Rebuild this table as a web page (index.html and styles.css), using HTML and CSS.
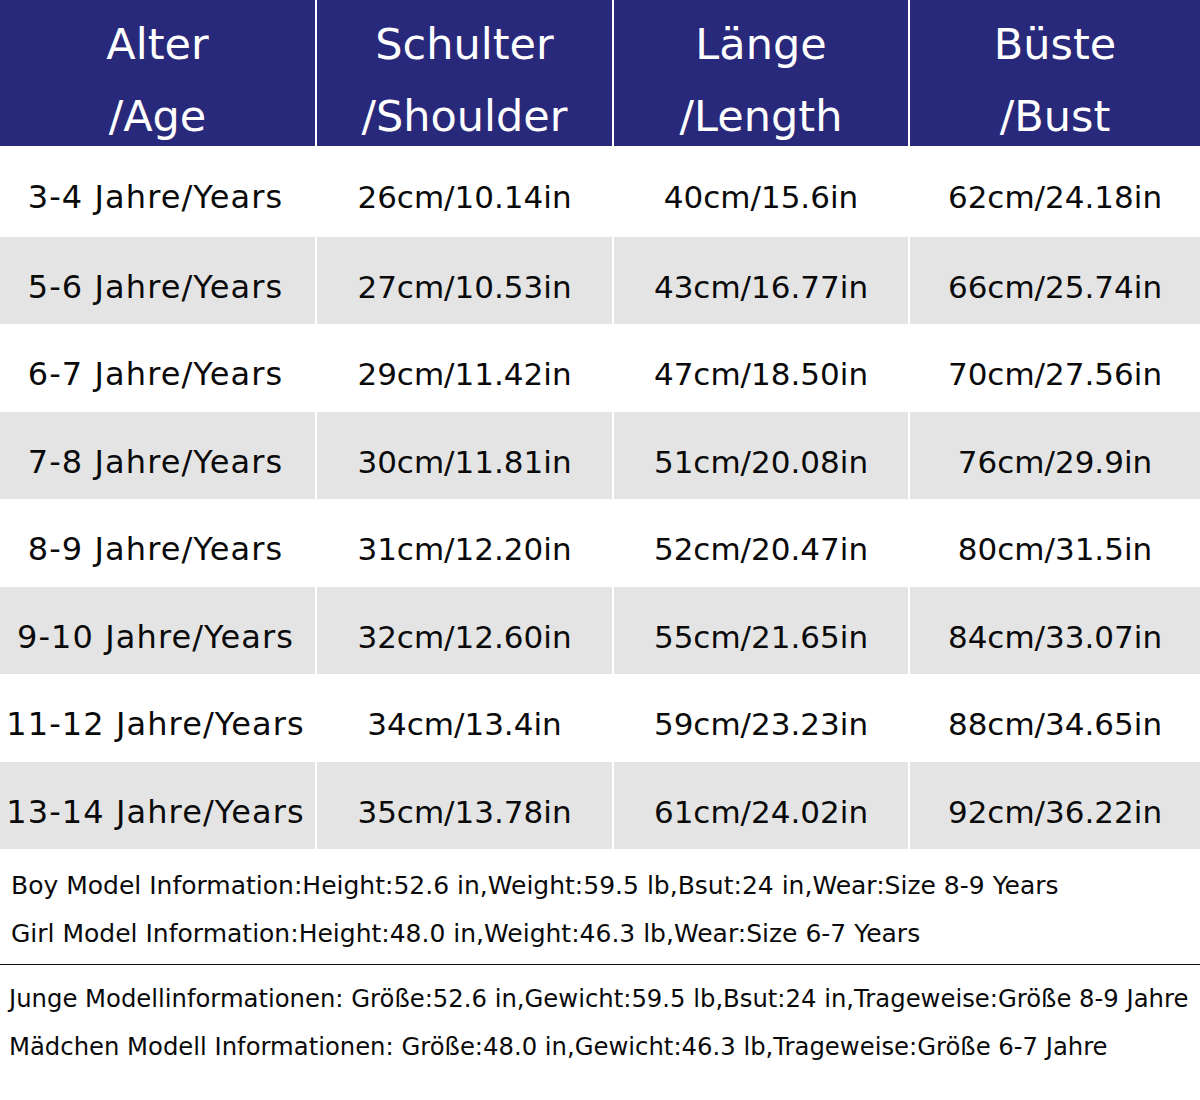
FILE: index.html
```html
<!DOCTYPE html>
<html lang="de">
<head>
<meta charset="utf-8">
<title>Size Chart</title>
<link rel="stylesheet" href="styles.css">
</head>
<body>
<div class="chart">
  <div class="row head">
    <div class="cell">Alter<br>/Age</div>
    <div class="cell">Schulter<br>/Shoulder</div>
    <div class="cell">Länge<br>/Length</div>
    <div class="cell">Büste<br>/Bust</div>
  </div>
  <div class="row first">
    <div class="cell age">3-4 Jahre/Years</div><div class="cell">26cm/10.14in</div><div class="cell">40cm/15.6in</div><div class="cell">62cm/24.18in</div>
  </div>
  <div class="row alt">
    <div class="cell age">5-6 Jahre/Years</div><div class="cell">27cm/10.53in</div><div class="cell">43cm/16.77in</div><div class="cell">66cm/25.74in</div>
  </div>
  <div class="row short">
    <div class="cell age">6-7 Jahre/Years</div><div class="cell">29cm/11.42in</div><div class="cell">47cm/18.50in</div><div class="cell">70cm/27.56in</div>
  </div>
  <div class="row alt">
    <div class="cell age">7-8 Jahre/Years</div><div class="cell">30cm/11.81in</div><div class="cell">51cm/20.08in</div><div class="cell">76cm/29.9in</div>
  </div>
  <div class="row short">
    <div class="cell age">8-9 Jahre/Years</div><div class="cell">31cm/12.20in</div><div class="cell">52cm/20.47in</div><div class="cell">80cm/31.5in</div>
  </div>
  <div class="row alt">
    <div class="cell age">9-10 Jahre/Years</div><div class="cell">32cm/12.60in</div><div class="cell">55cm/21.65in</div><div class="cell">84cm/33.07in</div>
  </div>
  <div class="row short">
    <div class="cell age">11-12 Jahre/Years</div><div class="cell">34cm/13.4in</div><div class="cell">59cm/23.23in</div><div class="cell">88cm/34.65in</div>
  </div>
  <div class="row alt">
    <div class="cell age">13-14 Jahre/Years</div><div class="cell">35cm/13.78in</div><div class="cell">61cm/24.02in</div><div class="cell">92cm/36.22in</div>
  </div>
</div>
<div class="notes en">
  <p class="note">Boy Model Information:Height:52.6 in,Weight:59.5 lb,Bsut:24 in,Wear:Size 8-9 Years</p>
  <p class="note">Girl Model Information:Height:48.0 in,Weight:46.3 lb,Wear:Size 6-7 Years</p>
</div>
<div class="notes de">
  <p class="note">Junge Modellinformationen: Größe:52.6 in,Gewicht:59.5 lb,Bsut:24 in,Trageweise:Größe 8-9 Jahre</p>
  <p class="note">Mädchen Modell Informationen: Größe:48.0 in,Gewicht:46.3 lb,Trageweise:Größe 6-7 Jahre</p>
</div>
</body>
</html>
```

FILE: styles.css
```css
html, body {
  margin: 0;
  padding: 0;
  background: #ffffff;
}
body {
  width: 1200px;
  height: 1100px;
  overflow: hidden;
  font-family: "DejaVu Sans", "Open Sans", sans-serif;
  color: #0a0a0a;
}
.chart {
  display: flex;
  flex-direction: column;
}
.row {
  display: grid;
  grid-template-columns: 315px 295px 294px 290px;
  column-gap: 2px;
  height: 88px;
  box-sizing: border-box;
  padding-bottom: 1px;
  background: #ffffff;
}
.row.first {
  height: 91px;
}
.row.short {
  height: 87px;
}
.row .cell {
  display: flex;
  align-items: center;
  justify-content: center;
  text-align: center;
  font-size: 31px;
  padding-top: 12px;
  white-space: nowrap;
}
.row .cell.age {
  font-size: 32px;
  letter-spacing: 1.1px;
  padding-right: 4px;
}
.row.alt .cell {
  background: #e4e4e4;
}
.row.head {
  height: 146px;
  padding-bottom: 0;
  background: #ffffff;
}
.row.head .cell {
  align-items: flex-start;
  padding-top: 8px;
  padding-right: 0;
  background: #29297b;
  color: #ffffff;
  font-size: 43px;
  letter-spacing: 0;
  line-height: 72px;
}
.notes {
  margin: 0;
}
.notes.en {
  padding: 12px 0 6px 11px;
  font-size: 25px;
}
.notes.de {
  border-top: 1px solid #111111;
  padding: 10px 0 0 9px;
  font-size: 24.3px;
}
.note {
  margin: 0;
  line-height: 48px;
  white-space: nowrap;
}
```
